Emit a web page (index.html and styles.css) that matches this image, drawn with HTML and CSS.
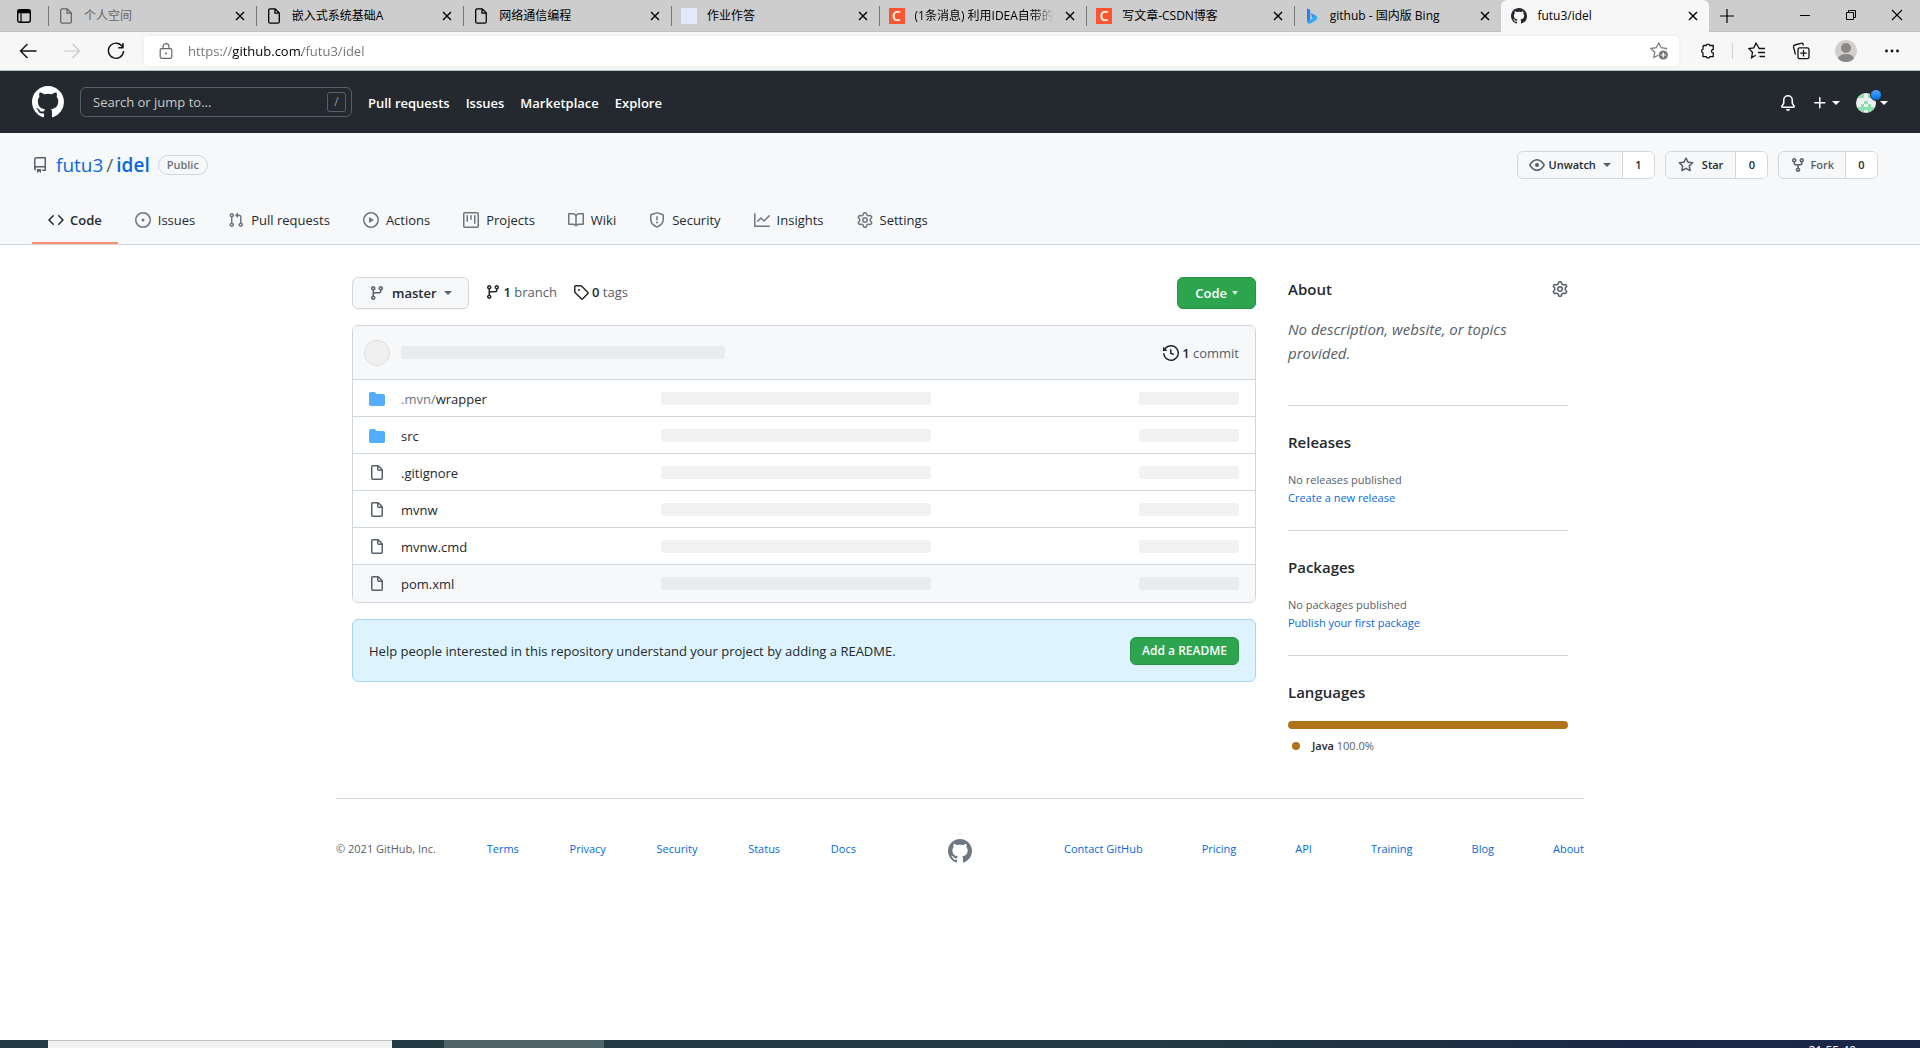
FILE: index.html
```html
<!DOCTYPE html>
<html lang="en">
<head>
<meta charset="utf-8">
<title>futu3/idel</title>
<link rel="stylesheet" href="styles.css">
</head>
<body>
<svg class="sprite" aria-hidden="true">
  <symbol id="mark" viewBox="0 0 16 16"><path fill-rule="evenodd" d="M8 0C3.58 0 0 3.58 0 8c0 3.54 2.29 6.53 5.47 7.59.4.07.55-.17.55-.38 0-.19-.01-.82-.01-1.49-2.01.37-2.53-.49-2.69-.94-.09-.23-.48-.94-.82-1.13-.28-.15-.68-.52-.01-.53.63-.01 1.08.58 1.23.82.72 1.21 1.87.87 2.33.66.07-.52.28-.87.51-1.07-1.78-.2-3.64-.89-3.64-3.95 0-.87.31-1.59.82-2.15-.08-.2-.36-1.02.08-2.12 0 0 .67-.21 2.2.82.64-.18 1.32-.27 2-.27.68 0 1.36.09 2 .27 1.53-1.04 2.2-.82 2.2-.82.44 1.1.16 1.92.08 2.12.51.56.82 1.27.82 2.15 0 3.07-1.87 3.75-3.65 3.95.29.25.54.73.54 1.48 0 1.07-.01 1.93-.01 2.2 0 .21.15.46.55.38A8.013 8.013 0 0016 8c0-4.42-3.58-8-8-8z"/></symbol>
  <symbol id="page" viewBox="0 0 16 16"><path fill="none" stroke="currentColor" stroke-width="1.3" d="M3.2.8h6L13.300 5v8.700a1.500 1.500 0 0 1-1.500 1.500H4.200a1.500 1.500 0 0 1-1.500-1.500V2.300A1.500 1.500 0 0 1 4.200.8M9 .8v4.400h4.300"/></symbol>
  <symbol id="cross" viewBox="0 0 12 12"><path fill="none" stroke="currentColor" stroke-width="1.400" d="M2 2l8 8M10 2l-8 8"/></symbol>
  <symbol id="file" viewBox="0 0 16 16"><path fill-rule="evenodd" d="M3.750 1.500a.25.25 0 00-.25.25v11.500c0 .138.112.25.25.25h8.500a.25.25 0 00.25-.25V6H9.750A1.750 1.750 0 018 4.250V1.500H3.750zm5.750.56v2.190c0 .138.112.25.25.25h2.190L9.500 2.060zM2 1.750C2 .784 2.784 0 3.750 0h5.086c.464 0 .909.184 1.237.513l3.414 3.414c.329.328.513.773.513 1.237v8.086A1.750 1.750 0 0112.250 15h-8.500A1.750 1.750 0 012 13.250V1.750z"/></symbol>
  <symbol id="folder" viewBox="0 0 16 16"><path fill-rule="evenodd" d="M1.750 1A1.750 1.750 0 000 2.750v10.500C0 14.216.784 15 1.750 15h12.500A1.750 1.750 0 0016 13.250v-8.500A1.750 1.750 0 0014.250 3h-6.500a.25.25 0 01-.2-.1l-.9-1.200c-.33-.44-.85-.7-1.400-.7h-3.500z"/></symbol>
  <symbol id="branch" viewBox="0 0 16 16"><path fill-rule="evenodd" d="M11.750 2.500a.75.75 0 100 1.500.75.75 0 000-1.500zm-2.250.75a2.250 2.250 0 113 2.122V6A2.500 2.500 0 0110 8.500H6a1 1 0 00-1 1v1.128a2.251 2.251 0 11-1.500 0V5.372a2.250 2.250 0 111.500 0v1.836A2.492 2.492 0 016 7h4a1 1 0 001-1v-.628A2.250 2.250 0 019.500 3.250zM4.250 12a.75.75 0 100 1.500.75.75 0 000-1.500zM3.500 3.250a.75.75 0 111.500 0 .75.75 0 01-1.500 0z"/></symbol>
  <symbol id="gear" viewBox="0 0 16 16"><path fill-rule="evenodd" d="M7.429 1.525a6.593 6.593 0 011.142 0c.036.003.108.036.137.146l.289 1.105c.147.56.55.967.997 1.189.174.086.341.183.501.29.417.278.97.423 1.530.27l1.102-.303c.11-.03.175.016.195.046.219.31.41.641.573.989.014.031.022.11-.059.190l-.815.806c-.411.406-.562.957-.530 1.456a4.588 4.588 0 010 .582c-.032.499.119 1.050.530 1.456l.815.806c.080.080.073.159.059.190a6.494 6.494 0 01-.573.990c-.020.029-.086.074-.195.045l-1.103-.303c-.559-.153-1.112-.008-1.529.270-.160.107-.327.204-.500.290-.449.222-.851.628-.998 1.189l-.289 1.105c-.029.110-.101.143-.137.146a6.613 6.613 0 01-1.142 0c-.036-.003-.108-.037-.137-.146l-.289-1.105c-.147-.560-.550-.967-.997-1.189a4.502 4.502 0 01-.501-.290c-.417-.278-.970-.423-1.530-.270l-1.102.303c-.110.030-.175-.016-.195-.046a6.492 6.492 0 01-.573-.989c-.014-.031-.022-.110.059-.190l.815-.806c.411-.406.562-.957.530-1.456a4.587 4.587 0 010-.582c.032-.499-.119-1.050-.530-1.456l-.815-.806c-.080-.080-.073-.159-.059-.190a6.440 6.440 0 01.573-.990c.020-.029.086-.075.195-.045l1.103.303c.559.153 1.112.008 1.529-.270.160-.107.327-.204.500-.290.449-.222.851-.628.998-1.189l.289-1.105c.029-.110.101-.143.137-.146zM8 0c-.236 0-.470.010-.701.030-.743.065-1.290.615-1.458 1.261l-.290 1.106c-.017.066-.078.158-.211.224a5.994 5.994 0 00-.668.386c-.123.082-.233.090-.300.071L3.270 2.776c-.644-.177-1.392.020-1.820.630a7.977 7.977 0 00-.704 1.217c-.315.675-.111 1.422.363 1.891l.815.806c.050.048.098.147.088.294a6.084 6.084 0 000 .772c.010.147-.038.246-.088.294l-.815.806c-.474.469-.678 1.216-.363 1.891.200.428.436.835.704 1.218.428.609 1.176.806 1.820.630l1.103-.303c.066-.019.176-.011.299.071.213.143.436.272.668.386.133.066.194.158.212.224l.289 1.106c.169.646.715 1.196 1.458 1.260a8.094 8.094 0 001.402 0c.743-.064 1.290-.614 1.458-1.260l.290-1.106c.017-.066.078-.158.211-.224a5.980 5.980 0 00.668-.386c.123-.082.233-.090.300-.071l1.102.302c.644.177 1.392-.020 1.820-.630.268-.382.505-.789.704-1.217.315-.675.111-1.422-.364-1.891l-.814-.806c-.050-.048-.098-.147-.088-.294a6.100 6.100 0 000-.772c-.010-.147.039-.246.088-.294l.814-.806c.475-.469.679-1.216.364-1.891a7.992 7.992 0 00-.704-1.218c-.428-.609-1.176-.806-1.820-.630l-1.103.303c-.066.019-.176.011-.299-.071a5.991 5.991 0 00-.668-.386c-.133-.066-.194-.158-.212-.224L10.160 1.290C9.990.645 9.444.095 8.701.031A8.094 8.094 0 008 0zm1.500 8a1.500 1.500 0 11-3 0 1.500 1.500 0 013 0zM11 8a3 3 0 11-6 0 3 3 0 016 0z"/></symbol>
</svg>

<nav class="tabstrip" aria-label="Browser tabs">
  <button class="tab-menu" aria-label="Tab actions"><svg class="i16" viewBox="0 0 16 16"><rect x="1.700" y="1.700" width="12.600" height="12.600" rx="2" fill="none" stroke="currentColor" stroke-width="1.400"/><path d="M1.700 1.700h12.600v3.600H1.700z"/><path d="M5 4v10" stroke="currentColor" stroke-width="1.200"/></svg></button>
  <div class="tab muted"><svg class="i16"><use href="#page"/></svg><span class="tab-title">个人空间</span><button class="tab-close" aria-label="Close tab"><svg class="i12"><use href="#cross"/></svg></button></div>
  <div class="tab"><svg class="i16"><use href="#page"/></svg><span class="tab-title">嵌入式系统基础A</span><button class="tab-close" aria-label="Close tab"><svg class="i12"><use href="#cross"/></svg></button></div>
  <div class="tab"><svg class="i16"><use href="#page"/></svg><span class="tab-title">网络通信编程</span><button class="tab-close" aria-label="Close tab"><svg class="i12"><use href="#cross"/></svg></button></div>
  <div class="tab"><span class="favicon pale"></span><span class="tab-title">作业作答</span><button class="tab-close" aria-label="Close tab"><svg class="i12"><use href="#cross"/></svg></button></div>
  <div class="tab"><span class="favicon csdn">C</span><span class="tab-title faded">(1条消息) 利用IDEA自带的G</span><button class="tab-close" aria-label="Close tab"><svg class="i12"><use href="#cross"/></svg></button></div>
  <div class="tab"><span class="favicon csdn">C</span><span class="tab-title">写文章-CSDN博客</span><button class="tab-close" aria-label="Close tab"><svg class="i12"><use href="#cross"/></svg></button></div>
  <div class="tab"><svg class="i16" viewBox="0 0 16 16"><defs><linearGradient id="bing" x1="0" y1="0" x2="1" y2="1"><stop offset="0" stop-color="#2a7cf0"/><stop offset="1" stop-color="#35c8e8"/></linearGradient></defs><path fill="#2a7cf0" d="M3 .5l3.200 1.200v9.800L3 14z"/><path fill="url(#bing)" d="M7 5l5 2.400c1.800 1 1.600 3.900-.2 5L6.400 15.500c-1.600.6-3-.2-3.400-1.700l6-3.600-1.200-.6z"/></svg><span class="tab-title">github - 国内版 Bing</span><button class="tab-close" aria-label="Close tab"><svg class="i12"><use href="#cross"/></svg></button></div>
  <div class="tab active"><svg class="i16 ink"><use href="#mark"/></svg><span class="tab-title">futu3/idel</span><button class="tab-close" aria-label="Close tab"><svg class="i12"><use href="#cross"/></svg></button></div>
  <button class="new-tab" aria-label="New tab"><svg class="i16" viewBox="0 0 16 16"><path fill="none" stroke="currentColor" stroke-width="1.200" d="M8 1v14M1 8h14"/></svg></button>
  <div class="window-buttons">
    <button aria-label="Minimize"><svg class="i12" viewBox="0 0 12 12"><path stroke="currentColor" d="M1 6.500h10"/></svg></button>
    <button aria-label="Restore"><svg class="i12" viewBox="0 0 12 12"><path fill="none" stroke="currentColor" d="M1.500 3.500h7v7h-7zM3.500 3.500v-2h7v7h-2"/></svg></button>
    <button aria-label="Close"><svg class="i12" viewBox="0 0 12 12"><path fill="none" stroke="currentColor" stroke-width="1.100" d="M1 1l10 10M11 1L1 11"/></svg></button>
  </div>
</nav>

<div class="toolbar">
  <button aria-label="Back"><svg class="i18" viewBox="0 0 18 18"><path fill="none" stroke="currentColor" stroke-width="1.400" d="M17.500 9H1.500M8.500 2l-7 7 7 7"/></svg></button>
  <button class="disabled" aria-label="Forward" disabled><svg class="i18" viewBox="0 0 18 18"><path fill="none" stroke="currentColor" stroke-width="1.200" d="M.5 9h16M9.500 2l7 7-7 7"/></svg></button>
  <button aria-label="Refresh"><svg class="i18" viewBox="0 0 18 18"><path fill="none" stroke="currentColor" stroke-width="1.400" d="M15.800 5.300A7.600 7.600 0 1 0 16.600 9M16 1v4.700h-4.700"/></svg></button>
  <div class="address">
    <svg class="i16" viewBox="0 0 16 16"><rect x="2.200" y="5.600" width="11.600" height="9.700" rx="1.500" fill="none" stroke="currentColor" stroke-width="1.200"/><path fill="none" stroke="currentColor" stroke-width="1.200" d="M5 5.500V3.600a3 3 0 0 1 6 0v1.900"/><circle cx="8" cy="10.500" r="1"/></svg>
    <input class="url" type="text" aria-label="Address" value="https://github.com/futu3/idel">
    <button class="add-fav" aria-label="Add to favorites"><svg class="i18" viewBox="0 0 18 18"><path fill="none" stroke="currentColor" stroke-width="1.200" d="M15.800 7.500l.6-1-5.200-.8L8.700 1 6.200 5.700 1 6.500l3.800 3.700-.9 5.300 4.300-2.300"/><circle cx="13.300" cy="13" r="4.600"/><path stroke="#fff" stroke-width="1.200" d="M13.300 10.400v5.200M10.700 13h5.200"/></svg></button>
  </div>
  <div class="tools">
    <button aria-label="Extensions"><svg class="i16" viewBox="0 0 16 16"><path fill="none" stroke="currentColor" stroke-width="1.300" d="M4 2.500h2.300a1.900 1.900 0 0 1 3.600 0h3.300v4a1.700 1.700 0 1 0 0 3.400v3.800H9.900a1.900 1.900 0 0 1-3.600 0H3V10a2 2 0 0 1 0-3.800V3.500a1 1 0 0 1 1-1z"/></svg></button>
    <span class="divider"></span>
    <button aria-label="Favorites"><svg class="i18" viewBox="0 0 18 18"><path fill="none" stroke="currentColor" stroke-width="1.300" d="M11 6L8 1.200 5.800 5.900.9 6.600l3.600 3.600-.9 5.500 4.200-2.500M10.500 6.500H17M10 10.500h7M11.500 14.500H17"/></svg></button>
    <button aria-label="Collections"><svg class="i18" viewBox="0 0 18 18"><path fill="none" stroke="currentColor" stroke-width="1.300" d="M3.500 12.500l-2-7.500a1.700 1.700 0 0 1 1.300-2L9 1.300a1.700 1.700 0 0 1 2.200 1.200l.3 1M6 7.500a1.700 1.700 0 0 1 1.700-1.700h7.600A1.700 1.700 0 0 1 17 7.500V15a1.700 1.700 0 0 1-1.700 1.700H7.700A1.700 1.700 0 0 1 6 15zM11.500 8v6.500M8.200 11.200h6.600"/></svg></button>
    <button class="roomy" aria-label="Profile"><svg class="i22" viewBox="0 0 22 22"><clipPath id="disc"><circle cx="11" cy="11" r="11"/></clipPath><g clip-path="url(#disc)"><path fill="#d2d0ce" d="M0 0h22v22H0z"/><circle cx="11" cy="8" r="5" fill="#8a8886"/><ellipse cx="11" cy="19" rx="8" ry="5" fill="#8a8886"/></g></svg></button>
    <button class="roomy" aria-label="More"><svg class="i16" viewBox="0 0 16 16"><circle cx="2.500" cy="8" r="1.400"/><circle cx="8" cy="8" r="1.400"/><circle cx="13.500" cy="8" r="1.400"/></svg></button>
  </div>
</div>

<header class="site-header">
  <a class="home" href="#" aria-label="Homepage"><svg class="i32"><use href="#mark"/></svg></a>
  <label class="search"><input type="text" placeholder="Search or jump to..." aria-label="Search or jump to"><kbd>/</kbd></label>
  <nav class="site-nav"><a href="#">Pull requests</a><a href="#">Issues</a><a href="#">Marketplace</a><a href="#">Explore</a></nav>
  <div class="user-tools">
    <button aria-label="Notifications"><svg class="i16" viewBox="0 0 16 16"><path d="M8 16a2 2 0 001.985-1.750c.017-.137-.097-.25-.235-.25h-3.500c-.138 0-.252.113-.235.25A2 2 0 008 16z"/><path fill-rule="evenodd" d="M8 1.500A3.500 3.500 0 004.500 5v2.947c0 .346-.102.683-.294.970l-1.703 2.556a.018.018 0 00-.003.010l.001.006c0 .002.002.004.004.006a.017.017 0 00.006.004l.007.001h10.964l.007-.001a.016.016 0 00.006-.004.016.016 0 00.004-.006l.001-.007a.017.017 0 00-.003-.010l-1.703-2.554a1.750 1.750 0 01-.294-.970V5A3.500 3.500 0 008 1.500zM3 5a5 5 0 0110 0v2.947c0 .050.015.098.042.139l1.703 2.555A1.518 1.518 0 0113.482 13H2.518a1.518 1.518 0 01-1.263-2.360l1.703-2.554A.25.25 0 003 7.947V5z"/></svg></button>
    <button class="create" aria-label="Create new"><svg class="i16" viewBox="0 0 16 16"><path fill-rule="evenodd" d="M7.750 2a.75.75 0 01.75.75V7h4.250a.75.75 0 110 1.500H8.500v4.250a.75.75 0 11-1.500 0V8.500H2.750a.75.75 0 010-1.500H7V2.750A.75.75 0 017.750 2z"/></svg><span class="caret"></span></button>
    <button class="account" aria-label="Account"><svg class="i20" viewBox="0 0 20 20"><clipPath id="ident"><circle cx="10" cy="10" r="10"/></clipPath><g clip-path="url(#ident)"><path fill="#f0f0f0" d="M0 0h20v20H0z"/><path fill="#8be0b0" d="M4 1h4v4H1V3h3zM12 1h4v4h-4zM8 8h4v3H8zM5 11h3v3h4v-3h3v3h3v3H2v-3h3zM5 17h3v3H5zM12 17h3v3h-3z"/></g></svg><span class="dot"></span><span class="caret"></span></button>
  </div>
</header>

<section class="repo-head">
  <div class="repo-top">
    <svg class="i16 soft" viewBox="0 0 16 16"><path fill-rule="evenodd" d="M2 2.500A2.500 2.500 0 014.500 0h8.750a.75.75 0 01.75.75v12.500a.75.75 0 01-.75.75h-2.500a.75.75 0 110-1.500h1.750v-2h-8a1 1 0 00-.714 1.700.75.75 0 01-1.072 1.050A2.495 2.495 0 012 11.500v-9zm10.500-1V9h-8c-.356 0-.694.074-1 .208V2.500a1 1 0 011-1h8zM5 12.250v3.250a.25.25 0 00.4.2l1.450-1.087a.25.25 0 01.3 0L8.600 15.700a.25.25 0 00.4-.2v-3.250a.25.25 0 00-.25-.25h-3.500a.25.25 0 00-.25.25z"/></svg>
    <h1 class="repo-name"><a href="#">futu3</a><span>/</span><a class="strong" href="#">idel</a></h1>
    <span class="badge">Public</span>
    <div class="actions">
      <div class="pair"><button><svg class="i16 soft" viewBox="0 0 16 16"><path fill-rule="evenodd" d="M1.679 7.932c.412-.621 1.242-1.750 2.366-2.717C5.175 4.242 6.527 3.500 8 3.500c1.473 0 2.824.742 3.955 1.715 1.124.967 1.954 2.096 2.366 2.717a.119.119 0 010 .136c-.412.621-1.242 1.750-2.366 2.717C10.825 11.758 9.473 12.500 8 12.500c-1.473 0-2.824-.742-3.955-1.715C2.920 9.818 2.090 8.690 1.679 8.068a.119.119 0 010-.136zM8 2c-1.981 0-3.670.992-4.933 2.078C1.797 5.169.880 6.423.430 7.100a1.619 1.619 0 000 1.798c.450.678 1.367 1.932 2.637 3.024C4.329 13.008 6.019 14 8 14c1.981 0 3.670-.992 4.933-2.078 1.270-1.091 2.187-2.345 2.637-3.023a1.619 1.619 0 000-1.798c-.450-.678-1.367-1.932-2.637-3.023C11.671 2.992 9.981 2 8 2zm0 8a2 2 0 100-4 2 2 0 000 4z"/></svg>Unwatch<span class="caret"></span></button><a href="#">1</a></div>
      <div class="pair"><button class="star"><svg class="i16 soft" viewBox="0 0 16 16"><path fill-rule="evenodd" d="M8 .25a.75.75 0 01.673.418l1.882 3.815 4.210.612a.75.75 0 01.416 1.279l-3.046 2.970.719 4.192a.75.75 0 01-1.088.791L8 12.347l-3.766 1.980a.75.75 0 01-1.088-.790l.720-4.194L.818 6.374a.75.75 0 01.416-1.280l4.210-.611L7.327.668A.75.75 0 018 .25zm0 2.445L6.615 5.500a.75.75 0 01-.564.410l-3.097.450 2.240 2.184a.75.75 0 01.216.664l-.528 3.084 2.769-1.456a.75.75 0 01.698 0l2.770 1.456-.530-3.084a.75.75 0 01.216-.664l2.240-2.183-3.096-.450a.75.75 0 01-.564-.410L8 2.694v.001z"/></svg>Star</button><a href="#">0</a></div>
      <div class="pair"><button class="fork"><svg class="i16" viewBox="0 0 16 16"><path fill-rule="evenodd" d="M5 3.250a.75.75 0 11-1.500 0 .75.75 0 011.500 0zm0 2.122a2.250 2.250 0 10-1.500 0v.878A2.250 2.250 0 005.750 8.500h1.500v2.128a2.251 2.251 0 101.500 0V8.500h1.500a2.250 2.250 0 002.250-2.250v-.878a2.250 2.250 0 10-1.500 0v.878a.75.75 0 01-.75.75h-4.500A.75.75 0 015 6.250v-.878zm3.750 7.378a.75.75 0 11-1.500 0 .75.75 0 011.500 0zm3-8.750a.75.75 0 100-1.500.75.75 0 000 1.500z"/></svg>Fork</button><a href="#">0</a></div>
    </div>
  </div>
  <nav class="repo-nav">
    <a class="current" href="#"><svg class="i16" viewBox="0 0 16 16"><path fill-rule="evenodd" d="M4.720 3.220a.75.75 0 011.060 1.060L2.060 8l3.720 3.720a.75.75 0 11-1.060 1.060L.470 8.530a.75.75 0 010-1.060l4.250-4.250zm6.560 0a.75.75 0 10-1.060 1.060L13.940 8l-3.720 3.720a.75.75 0 101.060 1.060l4.250-4.250a.75.75 0 000-1.060l-4.250-4.250z"/></svg>Code</a>
    <a href="#"><svg class="i16" viewBox="0 0 16 16"><path d="M8 9.500a1.500 1.500 0 100-3 1.500 1.500 0 000 3z"/><path fill-rule="evenodd" d="M8 0a8 8 0 100 16A8 8 0 008 0zM1.500 8a6.500 6.500 0 1113 0 6.500 6.500 0 01-13 0z"/></svg>Issues</a>
    <a href="#"><svg class="i16" viewBox="0 0 16 16"><path fill-rule="evenodd" d="M7.177 3.073L9.573.677A.25.25 0 0110 .854v4.792a.25.25 0 01-.427.177L7.177 3.427a.25.25 0 010-.354zM3.750 2.500a.75.75 0 100 1.500.75.75 0 000-1.500zm-2.250.75a2.250 2.250 0 113 2.122v5.256a2.251 2.251 0 11-1.500 0V5.372A2.250 2.250 0 011.500 3.250zM11 2.500h-1V4h1a1 1 0 011 1v5.628a2.251 2.251 0 101.500 0V5A2.500 2.500 0 0011 2.500zm1 10.250a.75.75 0 111.500 0 .75.75 0 01-1.500 0zM3.750 12a.75.75 0 100 1.500.75.75 0 000-1.500z"/></svg>Pull requests</a>
    <a href="#"><svg class="i16" viewBox="0 0 16 16"><path fill-rule="evenodd" d="M1.500 8a6.500 6.500 0 1113 0 6.500 6.500 0 01-13 0zM8 0a8 8 0 100 16A8 8 0 008 0zM6.379 5.227A.25.25 0 006 5.442v5.117a.25.25 0 00.379.214l4.264-2.559a.25.25 0 000-.428L6.379 5.227z"/></svg>Actions</a>
    <a href="#"><svg class="i16" viewBox="0 0 16 16"><path fill-rule="evenodd" d="M1.750 0A1.750 1.750 0 000 1.750v12.500C0 15.216.784 16 1.750 16h12.500A1.750 1.750 0 0016 14.250V1.750A1.750 1.750 0 0014.250 0H1.750zM1.500 1.750a.25.25 0 01.25-.25h12.500a.25.25 0 01.25.25v12.500a.25.25 0 01-.25.25H1.750a.25.25 0 01-.25-.25V1.750zM11.750 3a.75.75 0 00-.75.75v7.500a.75.75 0 001.500 0v-7.500a.75.75 0 00-.75-.75zm-8.250.75a.75.75 0 011.500 0v5.500a.75.75 0 01-1.500 0v-5.500zM8 3a.75.75 0 00-.75.75v3.500a.75.75 0 001.500 0v-3.500A.75.75 0 008 3z"/></svg>Projects</a>
    <a href="#"><svg class="i16" viewBox="0 0 16 16"><path fill-rule="evenodd" d="M0 1.750A.75.75 0 01.75 1h4.253c1.227 0 2.317.590 3 1.501A3.744 3.744 0 0111.006 1h4.245a.75.75 0 01.75.75v10.500a.75.75 0 01-.75.75h-4.507a2.250 2.250 0 00-1.591.659l-.622.621a.75.75 0 01-1.060 0l-.622-.621A2.250 2.250 0 005.258 13H.750a.75.75 0 01-.75-.75V1.750zm8.755 3a2.250 2.250 0 012.250-2.250H14.500v9h-3.757c-.710 0-1.400.201-1.992.572l.004-7.322zm-1.504 7.324l.004-5.073-.002-2.253A2.250 2.250 0 005.003 2.500H1.500v9h3.757a3.750 3.750 0 011.994.574z"/></svg>Wiki</a>
    <a href="#"><svg class="i16" viewBox="0 0 16 16"><path fill-rule="evenodd" d="M7.467.133a1.750 1.750 0 011.066 0l5.250 1.680A1.750 1.750 0 0115 3.480V7c0 1.566-.320 3.182-1.303 4.682-.983 1.498-2.585 2.813-5.032 3.855a1.700 1.700 0 01-1.330 0c-2.447-1.042-4.049-2.357-5.032-3.855C1.320 10.182 1 8.566 1 7V3.480a1.750 1.750 0 011.217-1.667l5.250-1.680zm.610 1.429a.25.25 0 00-.153 0l-5.250 1.680a.25.25 0 00-.174.238V7c0 1.358.275 2.666 1.057 3.860.784 1.194 2.121 2.340 4.366 3.297a.2.2 0 00.154 0c2.245-.956 3.582-2.104 4.366-3.298C13.225 9.666 13.500 8.360 13.500 7V3.480a.25.25 0 00-.174-.237l-5.250-1.680zM9 10.500a1 1 0 11-2 0 1 1 0 012 0zm-.250-5.750a.75.75 0 10-1.500 0v3a.75.75 0 001.500 0v-3z"/></svg>Security</a>
    <a href="#"><svg class="i16" viewBox="0 0 16 16"><path fill-rule="evenodd" d="M1.500 1.750a.75.75 0 00-1.500 0v12.500c0 .414.336.75.75.75h14.500a.75.75 0 000-1.500H1.500V1.750zm14.280 2.530a.75.75 0 00-1.060-1.060L10 7.940 7.530 5.470a.75.75 0 00-1.060 0L3.220 8.720a.75.75 0 001.060 1.060L7 7.060l2.470 2.470a.75.75 0 001.060 0l5.250-5.250z"/></svg>Insights</a>
    <a href="#"><svg class="i16"><use href="#gear"/></svg>Settings</a>
  </nav>
</section>

<main class="content">
  <div class="primary">
    <div class="file-nav">
      <button class="btn branch-btn"><svg class="i16 soft"><use href="#branch"/></svg>master<span class="caret"></span></button>
      <a class="stat" href="#"><svg class="i16"><use href="#branch"/></svg><span><b>1</b> branch</span></a>
      <a class="stat" href="#"><svg class="i16" viewBox="0 0 16 16"><path fill-rule="evenodd" d="M2.500 7.775V2.750a.25.25 0 01.25-.25h5.025a.25.25 0 01.177.073l6.250 6.250a.25.25 0 010 .354l-5.025 5.025a.25.25 0 01-.354 0l-6.250-6.250a.25.25 0 01-.073-.177zm-1.500 0V2.750C1 1.784 1.784 1 2.750 1h5.025c.464 0 .910.184 1.238.513l6.250 6.250a1.750 1.750 0 010 2.474l-5.026 5.026a1.750 1.750 0 01-2.474 0l-6.250-6.250A1.750 1.750 0 011 7.775zM6 5a1 1 0 100 2 1 1 0 000-2z"/></svg><span><b>0</b> tags</span></a>
      <button class="btn green code-btn">Code<span class="caret"></span></button>
    </div>
    <div class="files">
      <div class="files-head">
        <span class="avatar-skel"></span><span class="skel wide"></span>
        <a class="stat commits" href="#"><svg class="i16" viewBox="0 0 16 16"><path fill-rule="evenodd" d="M1.643 3.143L.427 1.927A.25.25 0 000 2.104V5.750c0 .138.112.25.25.25h3.646a.25.25 0 00.177-.427L2.715 4.215a6.500 6.500 0 11-1.180 4.458.75.75 0 10-1.493.154 8.001 8.001 0 101.600-5.684zM7.750 4a.75.75 0 01.75.75v2.992l2.028.812a.75.75 0 01-.557 1.392l-2.500-1A.75.75 0 017 8.250v-3.500A.75.75 0 017.750 4z"/></svg><span><b>1</b> commit</span></a>
      </div>
      <table class="file-table">
        <colgroup><col class="c-icon"><col class="c-name"><col><col class="c-date"></colgroup>
        <tbody>
          <tr><td class="icon"><svg class="i16 blue"><use href="#folder"/></svg></td><td class="name"><a href="#"><span class="dim">.mvn/</span>wrapper</a></td><td><span class="skel message"></span></td><td><span class="skel"></span></td></tr>
          <tr><td class="icon"><svg class="i16 blue"><use href="#folder"/></svg></td><td class="name"><a href="#">src</a></td><td><span class="skel message"></span></td><td><span class="skel"></span></td></tr>
          <tr><td class="icon"><svg class="i16 soft"><use href="#file"/></svg></td><td class="name"><a href="#">.gitignore</a></td><td><span class="skel message"></span></td><td><span class="skel"></span></td></tr>
          <tr><td class="icon"><svg class="i16 soft"><use href="#file"/></svg></td><td class="name"><a href="#">mvnw</a></td><td><span class="skel message"></span></td><td><span class="skel"></span></td></tr>
          <tr><td class="icon"><svg class="i16 soft"><use href="#file"/></svg></td><td class="name"><a href="#">mvnw.cmd</a></td><td><span class="skel message"></span></td><td><span class="skel"></span></td></tr>
          <tr class="hovered"><td class="icon"><svg class="i16 soft"><use href="#file"/></svg></td><td class="name"><a href="#">pom.xml</a></td><td><span class="skel message"></span></td><td><span class="skel"></span></td></tr>
        </tbody>
      </table>
    </div>
    <div class="readme-tip"><span>Help people interested in this repository understand your project by adding a README.</span><button class="btn green small">Add a README</button></div>
  </div>
  <aside class="sidebar">
    <section class="about"><h2>About<button aria-label="Edit details"><svg class="i16 soft"><use href="#gear"/></svg></button></h2><p class="desc">No description, website, or topics provided.</p></section>
    <section><h2>Releases</h2><p>No releases published<br><a href="#">Create a new release</a></p></section>
    <section><h2>Packages</h2><p>No packages published<br><a href="#">Publish your first package</a></p></section>
    <section><h2>Languages</h2><div class="lang-bar"></div><div class="lang"><span class="lang-dot"></span><span><b>Java</b> 100.0%</span></div></section>
  </aside>
</main>

<footer class="footer">
  <ul><li>© 2021 GitHub, Inc.</li><li><a href="#">Terms</a></li><li><a href="#">Privacy</a></li><li><a href="#">Security</a></li><li><a href="#">Status</a></li><li><a href="#">Docs</a></li></ul>
  <a class="footer-mark" href="#" aria-label="GitHub"><svg class="i24"><use href="#mark"/></svg></a>
  <ul><li><a href="#">Contact GitHub</a></li><li><a href="#">Pricing</a></li><li><a href="#">API</a></li><li><a href="#">Training</a></li><li><a href="#">Blog</a></li><li><a href="#">About</a></li></ul>
</footer>

<div class="taskbar"><span class="task-search"></span><span class="task-app"></span><time>21:55:40</time></div>
</body>
</html>
```
FILE: styles.css
```css
* { box-sizing: border-box; }
body {
  margin: 0;
  min-height: 100vh;
  display: flex;
  flex-direction: column;
  background: #fff;
  color: #24292f;
  font: 13px/20px "Open Sans", "Noto Sans CJK SC", sans-serif;
}
a { color: #0969da; text-decoration: none; }
button { margin: 0; padding: 0; border: 0; background: none; color: inherit; font: inherit; display: inline-flex; align-items: center; justify-content: center; }
h1, h2, p, ul { margin: 0; padding: 0; }
b { font-weight: 600; }
svg { fill: currentColor; flex: none; display: block; }
.sprite { display: none; }
.i12 { width: 12px; height: 12px; }
.i16 { width: 16px; height: 16px; }
.i18 { width: 18px; height: 18px; }
.i20 { width: 20px; height: 20px; }
.i22 { width: 22px; height: 22px; }
.i24 { width: 24px; height: 24px; }
.i32 { width: 32px; height: 32px; }
.soft { color: #57606a; }
.blue { color: #54aeff; }
.caret { border: 4px solid transparent; border-top-color: currentColor; border-bottom: 0; flex: none; }

/* Browser tabs */
.tabstrip { display: flex; height: 32px; background: #cdcdcd; color: #000; font-size: 12px; box-shadow: inset 0 -1px #c0c0c0; }
.tab-menu { width: 48px; flex: none; }
.tab { flex: 1 1 0; min-width: 0; display: flex; align-items: center; padding: 0 8px 0 10px; background: linear-gradient(#777, #777) 0 50% / 1px 20px no-repeat; }
.tab.muted > svg, .tab.muted .tab-title { color: #666; }
.tab.active { background: #f7f7f7; border-radius: 6px 6px 0 0; }
.tab-title { flex: 1; margin: 0 8px 0 10px; white-space: nowrap; overflow: hidden; line-height: 20px; }
.faded { -webkit-mask-image: linear-gradient(90deg, #000 85%, transparent); mask-image: linear-gradient(90deg, #000 85%, transparent); }
.favicon { width: 16px; height: 16px; flex: none; text-align: center; font: 600 14px/16px "Open Sans", sans-serif; }
.pale { background: #e3eaf5; }
.csdn { background: #fc5531; color: #fff; }
.ink { color: #24292f; }
.tab-close { width: 16px; height: 16px; flex: none; }
.new-tab { width: 36px; flex: none; }
.window-buttons { flex: none; margin-left: 37px; display: flex; align-items: center; height: 29px; }
.window-buttons button { width: 46px; height: 29px; }

/* Browser toolbar */
.toolbar { display: flex; align-items: center; height: 39px; padding: 0 5px 0 6px; background: #f7f7f7; border-bottom: 1px solid #b6bfbf; color: #111; }
.toolbar button { width: 44px; height: 30px; flex: none; }
.toolbar .roomy { width: 46px; }
.toolbar .disabled { color: #c8c8c8; }
.address { flex: 1; display: flex; align-items: center; height: 30px; margin-left: 6px; padding-left: 14px; background: #fff; border-radius: 4px; box-shadow: 0 0 3px #e2e2e2; color: #666; }
.url {
  flex: 1; min-width: 0; border: 0; padding: 0; margin-left: 14px; outline: 0; font: 13px/20px "Open Sans", sans-serif;
  color: transparent;
  background: linear-gradient(90deg, #717171 44px, #000 44px, #000 114px, #717171 114px);
  -webkit-background-clip: text; background-clip: text;
}
.toolbar .add-fav { width: 40px; color: #757575; }
.tools { display: flex; align-items: center; margin-left: 7px; }
.divider { width: 1px; height: 16px; margin: 0 2px; background: #d0d0d0; }

/* Site header */
.site-header { display: flex; align-items: center; gap: 16px; height: 62px; padding: 0 32px; background: #24292f; color: #fff; }
.home { color: #fff; }
.search { display: flex; align-items: center; width: 272px; height: 30px; padding: 0 5px 0 12px; border: 1px solid #57606a; border-radius: 6px; }
.search input { flex: 1; min-width: 0; border: 0; padding: 0; outline: 0; background: none; color: #fff; font: inherit; }
.search input::placeholder { color: #c8c9cb; opacity: 1; }
.search kbd { width: 19px; height: 20px; border: 1px solid #57606a; border-radius: 3px; text-align: center; color: #8c959f; font: 12px/18px "Open Sans", sans-serif; }
.site-nav { display: flex; gap: 16px; padding-top: 2px; }
.site-nav a { color: #fff; font-weight: 600; }
.user-tools { margin-left: auto; display: flex; align-items: center; gap: 16px; padding-top: 2px; }
.create { gap: 4px; }
.account { position: relative; gap: 4px; }
.dot { position: absolute; left: 14px; top: -4px; width: 12px; height: 12px; border: 1px solid #24292f; border-radius: 50%; background: linear-gradient(#54a3ff, #006eed); }

/* Repository header */
.repo-head { background: #f6f8fa; border-bottom: 1px solid #d0d7de; padding-top: 16px; }
.repo-top { display: flex; align-items: center; height: 32px; padding: 0 42px 0 32px; }
.repo-name { display: flex; gap: 3px; margin: 0 8px; font-size: 19px; line-height: 30px; font-weight: 400; color: #57606a; }
.strong { font-weight: 600; }
.badge { border: 1px solid #d0d7de; border-radius: 10px; padding: 0 8px; font-size: 11px; line-height: 18px; font-weight: 600; color: #6a727b; }
.actions { margin-left: auto; display: flex; gap: 10px; font-size: 11px; font-weight: 600; }
.pair { display: flex; height: 28px; border: 1px solid #d5d8da; border-radius: 6px; overflow: hidden; }
.pair button { padding: 0 11px; gap: 4px; border-right: 1px solid #d5d8da; }
.pair .caret, .branch-btn .caret { color: #57606a; }
.pair .caret { margin-left: 3px; }
.pair .star { gap: 8px; padding: 0 12px; }
.pair .fork { color: #57606a; }
.pair a { width: 31px; line-height: 26px; text-align: center; background: #fff; color: #24292f; }
.repo-nav { display: flex; gap: 1px; height: 48px; margin-top: 15px; padding: 0 32px; }
.repo-nav a { display: flex; align-items: center; gap: 7px; padding: 0 16px; color: #24292f; }
.repo-nav svg { color: #6e7781; }
.repo-nav .current { font-weight: 600; box-shadow: inset 0 -2px #fd8c73; gap: 6px; }
.repo-nav .current svg { color: #24292f; }

/* Buttons */
.btn { height: 32px; padding: 0 16px; border: 1px solid #d5d8da; border-radius: 6px; background: #f6f8fa; font-weight: 600; box-shadow: 0 1px 0 rgba(27, 31, 36, .04); }
.btn.green { background: #2da44e; border-color: #2a9247; color: #fff; }
.btn.small { height: 28px; padding: 0 11px; font-size: 12px; }
.branch-btn { gap: 7px; }
.btn.code-btn { margin-left: auto; padding: 0 17px; gap: 5px; }
.code-btn .caret { opacity: .8; border-width: 4px 3px 0; }

/* Main columns */
.content { width: 100%; max-width: 1280px; margin: 0 auto; padding: 32px; display: grid; grid-template-columns: minmax(0, 1fr) 280px; gap: 32px; }
.primary { display: flex; flex-direction: column; gap: 16px; }
.file-nav { display: flex; align-items: center; gap: 16px; }
.stat { display: flex; align-items: center; gap: 3px; color: #57606a; }
.file-nav .stat { padding-bottom: 2px; }
.stat svg, .stat b { color: #24292f; }
.files { border: 1px solid #d0d7de; border-radius: 6px; overflow: hidden; }
.files-head { display: flex; align-items: center; gap: 11px; height: 53px; padding: 0 16px 0 11px; background: #f6f8fa; }
.avatar-skel { width: 26px; height: 26px; border: 1px solid #dcdee0; border-radius: 50%; background: #f0f0f0; }
.skel { display: block; height: 13px; border-radius: 3px; background: rgba(27, 31, 35, .06); }
.skel.wide { width: 324px; }
.skel.message { width: 270px; max-width: 100%; }
.commits { margin-left: auto; }
.file-table { width: 100%; table-layout: fixed; border-collapse: collapse; }
.file-table td { height: 37px; padding: 0; border-top: 1px solid #d0d7de; }
.file-table .icon { padding: 2px 0 0 16px; }
.file-table .name { padding-top: 2px; }
.file-table td:last-child { padding-right: 16px; }
.file-table a { color: #24292f; }
.file-table .dim { color: #6e7781; }
.c-icon { width: 48px; }
.c-name { width: 260px; }
.c-date { width: 116px; }
.hovered { background: #f6f8fa; }
.readme-tip { display: flex; align-items: center; justify-content: space-between; height: 63px; padding: 2px 16px 0; border: 1px solid #a6d5fb; border-radius: 6px; background: #ddf4ff; }

/* Sidebar */
.sidebar { font-size: 11px; line-height: 18px; color: #57606a; }
.sidebar section { padding: 23px 0; border-bottom: 1px solid #d0d7de; }
.sidebar section:last-child { border: 0; padding-bottom: 0; }
.sidebar .about { padding: 0 0 40px; }
.sidebar h2 { display: flex; justify-content: space-between; margin-bottom: 16px; font-size: 15px; line-height: 26px; font-weight: 600; color: #24292f; }
.sidebar .about h2 { line-height: 24px; }
.sidebar .desc { font-size: 15px; line-height: 24px; font-style: italic; }
.lang-bar { height: 8px; margin-bottom: 8px; border-radius: 6px; background: #b07219; }
.lang { display: flex; align-items: center; gap: 12px; padding-left: 4px; }
.lang b { color: #24292f; }
.lang-dot { width: 8px; height: 8px; border-radius: 50%; background: #b07219; }

/* Footer */
.footer { width: 100%; max-width: 1248px; margin: 11px auto 64px; padding-top: 40px; border-top: 1px solid #d0d7de; display: grid; grid-template-columns: 5fr 2fr 5fr; font-size: 11px; line-height: 20px; color: #57606a; }
.footer ul { display: flex; justify-content: space-between; list-style: none; }
.footer-mark { justify-self: center; color: #6e7781; }

/* Sliver of the system taskbar */
.taskbar { margin-top: auto; display: flex; height: 8px; overflow: hidden; background: linear-gradient(90deg, #233b42 0 60%, #1b2845 85%, #1b2747); color: #fff; font-size: 12px; line-height: 16px; }
.task-search { width: 344px; margin-left: 48px; background: #f2f2f2; border-top: 1px solid #bfc3c3; }
.task-app { width: 160px; margin-left: 52px; background: #4f6469; }
.taskbar time { margin: 3px 64px 0 auto; }
```
